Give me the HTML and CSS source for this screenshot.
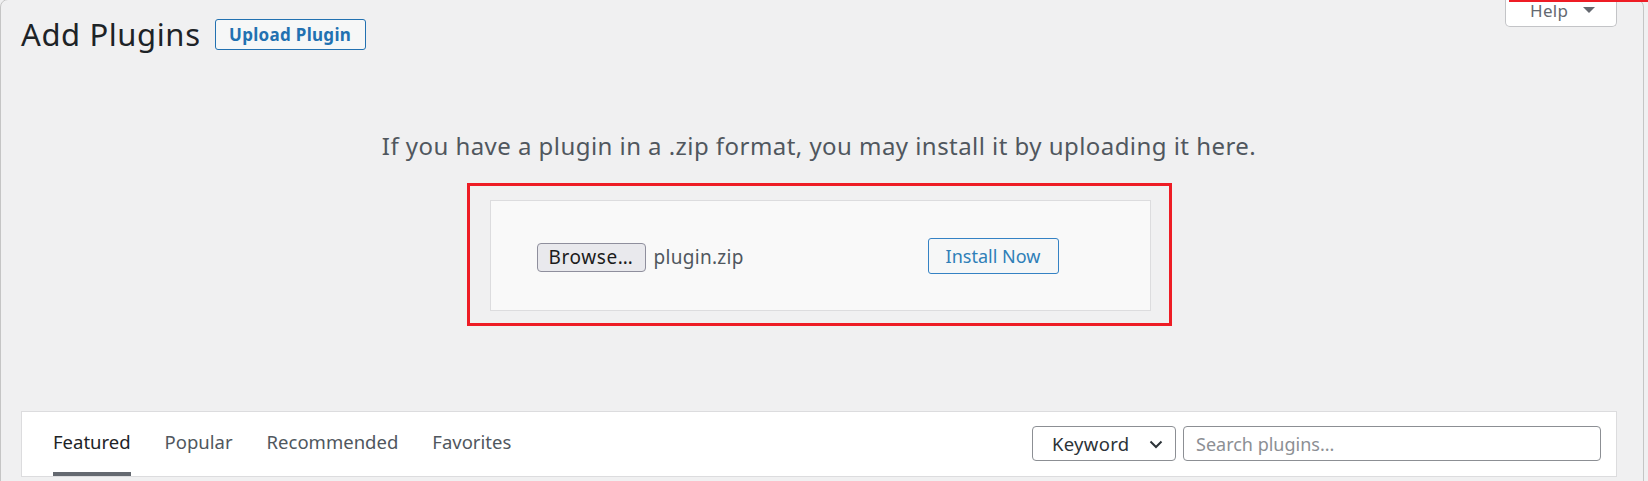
FILE: index.html
```html
<!DOCTYPE html>
<html lang="en">
<head>
<meta charset="utf-8">
<title>Add Plugins</title>
<link rel="stylesheet" href="styles.css">
</head>
<body>
<div class="frame">
  <div class="annot-line"></div>
  <div class="header">
    <div class="title-group">
      <h1 class="page-title">Add Plugins</h1>
      <a class="page-title-action">Upload Plugin</a>
    </div>
    <div class="help-tab"><span class="help-text">Help</span><span class="caret"></span></div>
  </div>

  <p class="install-help">If you have a plugin in a .zip format, you may install it by uploading it here.</p>

  <div class="highlight">
    <div class="upload-form">
      <div class="file-field">
        <span class="browse-btn">Browse…</span>
        <span class="file-name">plugin.zip</span>
      </div>
      <span class="install-btn">Install Now</span>
    </div>
  </div>

  <div class="wp-filter">
    <ul class="filter-links">
      <li class="current"><a>Featured</a></li>
      <li><a>Popular</a></li>
      <li><a>Recommended</a></li>
      <li><a>Favorites</a></li>
    </ul>
    <div class="search-form">
      <div class="select-box"><span>Keyword</span>
        <svg class="chevron" width="14" height="9" viewBox="0 0 14 9"><path d="M1.5 1.5 L7 7 L12.5 1.5" fill="none" stroke="#2c3338" stroke-width="2"/></svg>
      </div>
      <div class="search-input">Search plugins...</div>
    </div>
  </div>
</div>
</body>
</html>
```

FILE: styles.css
```css
html, body {
  margin: 0;
  padding: 0;
  background: #f0f0f1;
  overflow: hidden;
  height: 481px;
}

body {
  font-family: "Noto Sans", "Open Sans", sans-serif;
  color: #3c434a;
}

.frame {
  position: relative;
  box-sizing: border-box;
  width: 1644px;
  min-height: 500px;
  margin-top: -1px;
  border: 1px solid #c5c5c5;
  border-radius: 8px;
  padding: 0 26px 0 20px;
  background: #f0f0f1;
}

.annot-line {
  position: absolute;
  top: 0;
  left: 1508px;
  width: 200px;
  height: 2px;
  background: #ee1c25;
}

.header {
  display: flex;
  justify-content: space-between;
  align-items: flex-start;
}

.title-group {
  display: flex;
  align-items: center;
  padding-top: 14px;
}

.page-title {
  margin: 0;
  font-size: 31px;
  letter-spacing: 0.6px;
  line-height: 40px;
  font-weight: 400;
  color: #1d2327;
}

.page-title-action {
  box-sizing: border-box;
  width: 151px;
  height: 31px;
  margin-left: 14px;
  display: flex;
  align-items: center;
  justify-content: center;
  border: 1px solid #2271b1;
  border-radius: 3px;
  background: #f6f7f7;
  color: #2271b1;
  font-size: 17px;
  letter-spacing: 0.3px;
  font-weight: 700;
}

.help-tab {
  box-sizing: border-box;
  width: 112px;
  height: 27px;
  display: flex;
  align-items: flex-start;
  padding: 0 0 0 24px;
  background: #fff;
  border: 1px solid #c3c4c7;
  border-top: none;
  border-radius: 0 0 5px 5px;
  color: #646970;
}

.help-text {
  font-size: 17px;
  letter-spacing: 0.3px;
  line-height: 22px;
}

.caret {
  margin: 7px 0 0 15px;
  width: 0;
  height: 0;
  border-left: 6.5px solid transparent;
  border-right: 6.5px solid transparent;
  border-top: 6px solid #646970;
}

.install-help {
  margin: 77px 0 0;
  text-align: center;
  font-size: 24px;
  letter-spacing: 0.45px;
  line-height: 30px;
  color: #50575e;
}

.highlight {
  width: fit-content;
  margin: 22px auto 0;
  border: 3px solid #ee1c25;
  padding: 14px 18px 12px 20px;
}

.upload-form {
  box-sizing: border-box;
  width: 661px;
  height: 111px;
  display: flex;
  align-items: center;
  padding-left: 46px;
  border: 1px solid #dcdcde;
  background: #f9f9f9;
}

.file-field {
  width: 391px;
  display: flex;
  align-items: center;
  gap: 8px;
  padding-top: 3px;
}

.browse-btn {
  box-sizing: border-box;
  width: 109px;
  height: 29px;
  display: flex;
  align-items: center;
  justify-content: center;
  background: #e9e9ed;
  border: 1px solid #8f8f9d;
  border-radius: 4px;
  color: #1b1b1b;
  font-size: 19px;
  letter-spacing: 0.6px;
}

.file-name {
  font-size: 19px;
  letter-spacing: 0.3px;
  color: #50575e;
}

.install-btn {
  box-sizing: border-box;
  width: 131px;
  height: 36px;
  display: flex;
  align-items: center;
  justify-content: center;
  border: 1px solid #3582c4;
  border-radius: 3px;
  background: #f6f7f7;
  color: #2f7fb8;
  font-size: 18px;
}

.wp-filter {
  margin-top: 85px;
  display: flex;
  justify-content: space-between;
  align-items: flex-start;
  background: #fff;
  border: 1px solid #dcdcde;
  padding: 0 15px 0 31px;
}

.filter-links {
  display: flex;
  gap: 34px;
  margin: 0;
  padding: 0;
  list-style: none;
}

.filter-links a {
  display: block;
  padding: 17px 0 18px;
  border-bottom: 4px solid transparent;
  font-size: 18.5px;
  line-height: 25px;
  color: #50575e;
}

.filter-links .current a {
  color: #1d2327;
  border-bottom-color: #646970;
}

.search-form {
  display: flex;
  gap: 7px;
  padding-top: 14px;
}

.select-box {
  box-sizing: border-box;
  width: 144px;
  height: 35px;
  display: flex;
  align-items: center;
  justify-content: space-between;
  padding: 0 12px 0 19px;
  border: 1px solid #8c8f94;
  border-radius: 4px;
  font-size: 18.5px;
  letter-spacing: 0.3px;
  color: #2c3338;
}

.chevron {
  margin-top: 2px;
}

.search-input {
  box-sizing: border-box;
  width: 418px;
  height: 35px;
  display: flex;
  align-items: center;
  padding-left: 12px;
  border: 1px solid #8c8f94;
  border-radius: 4px;
  font-size: 18px;
  color: #8c8f94;
}
```
